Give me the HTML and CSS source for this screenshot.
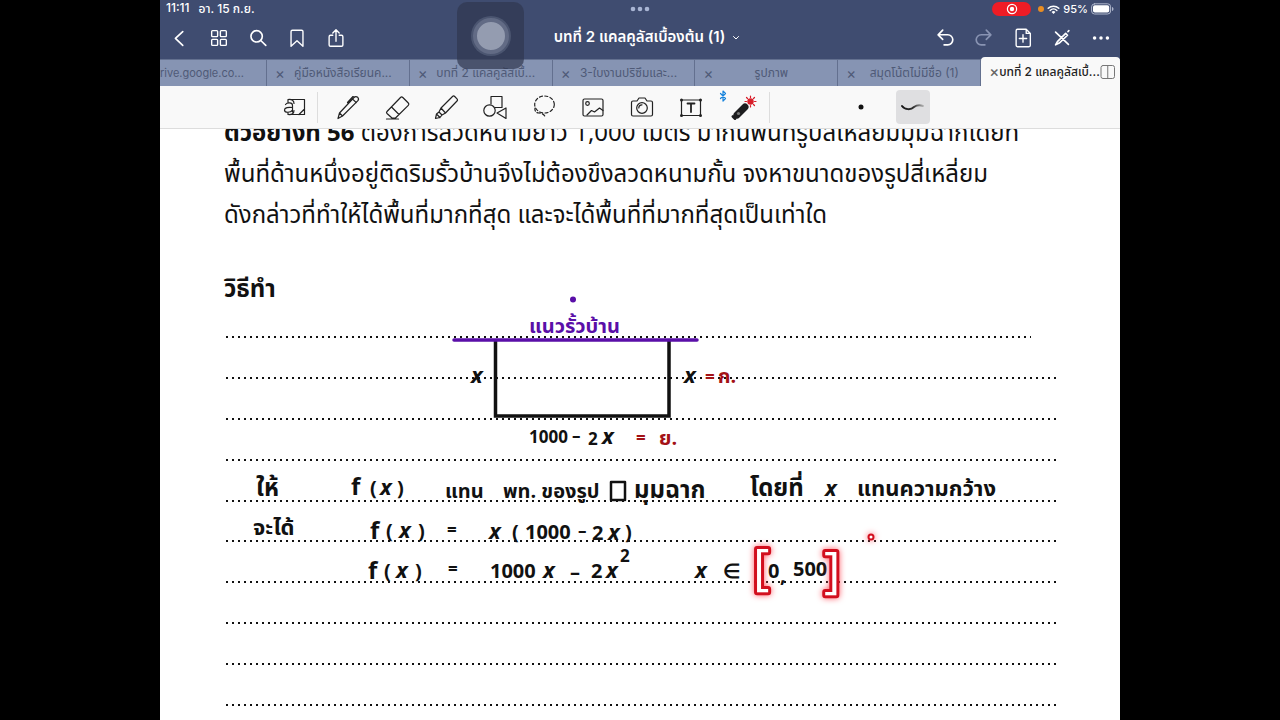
FILE: index.html
```html
<!DOCTYPE html>
<html lang="th">
<head>
<meta charset="utf-8">
<meta name="viewport" content="width=device-width, initial-scale=1">
<title>บทที่ 2 แคลคูลัสเบื้องต้น (1)</title>
<link rel="stylesheet" href="styles.css">
</head>
<body>
<div class="app">
  <header class="header">
    <div class="status">
      <div class="status-left"><span>11:11</span><span>อา. 15 ก.ย.</span></div>
      <svg class="multitask" viewBox="0 0 20 6" aria-hidden="true"><circle cx="3" cy="3" r="2.3"/><circle cx="10" cy="3" r="2.3"/><circle cx="17" cy="3" r="2.3"/></svg>
      <div class="status-right">
        <span class="recording"><svg viewBox="0 0 12 12" aria-hidden="true"><circle class="ring" cx="6" cy="6" r="4.6"/><circle class="core" cx="6" cy="6" r="2.2"/></svg></span>
        <span class="mic"></span>
        <svg class="wifi" viewBox="0 0 14 11" aria-hidden="true"><path d="M1.3 4.2a8.2 8.2 0 0 1 11.4 0M3.4 6.5a5.2 5.2 0 0 1 7.2 0"/><path class="solid" d="M4.9 8.2a3 3 0 0 1 4.2 0L7 10.4z"/></svg>
        <span class="percent">95%</span>
        <svg class="battery" viewBox="0 0 23 12" aria-hidden="true"><rect class="shell" x=".6" y=".8" width="19" height="10.2" rx="3"/><rect class="charge" x="2" y="2.2" width="16.2" height="7.4" rx="1.8"/><path class="cap" d="M21 4v4c.9-.3 1.5-1.1 1.5-2S21.900 4.300 21 4z"/></svg>
      </div>
    </div>
    <nav class="nav">
      <div class="nav-group">
        <button class="nav-btn" aria-label="ย้อนกลับ"><svg viewBox="0 0 24 24"><path d="M15 5l-8 7.500 8 7.500"/></svg></button>
        <button class="nav-btn" aria-label="ภาพย่อ"><svg class="thin" viewBox="0 0 24 24"><rect x="4" y="4" width="6.500" height="6.500" rx="1"/><rect x="13.500" y="4" width="6.500" height="6.500" rx="1"/><rect x="4" y="13.500" width="6.500" height="6.500" rx="1"/><rect x="13.500" y="13.500" width="6.500" height="6.500" rx="1"/></svg></button>
        <button class="nav-btn" aria-label="ค้นหา"><svg viewBox="0 0 24 24"><circle cx="10.500" cy="10.200" r="6.200"/><path d="M15 14.700l5.500 5.300"/></svg></button>
        <button class="nav-btn" aria-label="บุ๊กมาร์ก"><svg class="thin" viewBox="0 0 24 24"><path d="M7 3.500h10a1.500 1.500 0 0 1 1.500 1.500v16L12 15l-6.500 6V5A1.500 1.500 0 0 1 7 3.500z"/></svg></button>
        <button class="nav-btn" aria-label="แชร์"><svg class="thin" viewBox="0 0 24 24"><path d="M8.500 9H6a1.500 1.500 0 0 0-1.500 1.500v9A1.500 1.500 0 0 0 6 21h12a1.500 1.500 0 0 0 1.500-1.500v-9A1.500 1.500 0 0 0 18 9h-2.500M12 15.500V3.500M8.500 6.500L12 3l3.500 3.500"/></svg></button>
      </div>
      <button class="doc-title">บทที่ 2 แคลคูลัสเบื้องต้น (1)<svg viewBox="0 0 8 6" aria-hidden="true"><path d="M1.500 1.500L4 4l2.500-2.500"/></svg></button>
      <div class="nav-group nav-end">
        <button class="nav-btn" aria-label="เลิกทำ"><svg viewBox="0 0 24 24"><path d="M9.500 3.500L4.500 8.500l5 5M5 8.500h10a5.500 5.500 0 0 1 0 11h-4"/></svg></button>
        <button class="nav-btn faded" aria-label="ทำซ้ำ"><svg viewBox="0 0 24 24"><path d="M14.500 3.500l5 5-5 5M19 8.500H9a5.500 5.500 0 0 0 0 11h4"/></svg></button>
        <button class="nav-btn" aria-label="เพิ่มหน้า"><svg class="thin" viewBox="0 0 24 24"><path d="M6 2.500h9.500L20 7v13a1.500 1.500 0 0 1-1.500 1.500H6A1.500 1.500 0 0 1 4.500 20V4A1.500 1.500 0 0 1 6 2.500zM15.500 2.500V7H20M12 8.500v8M8 12.500h8"/></svg></button>
        <button class="nav-btn" aria-label="โหมดอ่าน"><svg viewBox="0 0 24 24"><path d="M5 5.500l14 13.500M5 19.500l2-3.500 9-9 2 2-9 8.500zM18.500 5l1-1"/></svg></button>
        <button class="nav-btn" aria-label="เพิ่มเติม"><svg class="dots" viewBox="0 0 24 24"><circle cx="5" cy="12" r="1.900"/><circle cx="12" cy="12" r="1.900"/><circle cx="19" cy="12" r="1.900"/></svg></button>
      </div>
    </nav>
  </header>

  <div class="tabs">
    <button class="tab tab-cut"><span>rive.google.co...</span></button>
    <button class="tab"><i>×</i><span>คู่มือหนังสือเรียนค...</span></button>
    <button class="tab"><i>×</i><span>บทที่ 2 แคลคูลัสเบื้...</span></button>
    <button class="tab"><i>×</i><span>3-ใบงานปริซึมและ...</span></button>
    <button class="tab"><i>×</i><span>รูปภาพ</span></button>
    <button class="tab"><i>×</i><span>สมุดโน้ตไม่มีชื่อ (1)</span></button>
    <button class="tab tab-active"><i>×</i><span>บทที่ 2 แคลคูลัสเบื้...</span><svg viewBox="0 0 16 16" aria-hidden="true"><rect x="1" y="1.500" width="13.500" height="13" rx="2"/><path d="M7.750 1.500v13"/></svg></button>
  </div>

  <div class="toolbar">
    <button class="tool" aria-label="ซูม"><svg viewBox="0 0 28 28"><path d="M8 9V6.500h16.500v15H8v-2M24 16.500l-5 5M5.500 11.500c1.500-2 7-2.500 7 1V19M12.500 14.500c-4-.5-8 0-8 2.500 0 3 6 3 8 0M8 6.500c4-.5 6 1 6 4M8 21.500c4 .5 6-1 6-4"/></svg></button>
    <span class="divider"></span>
    <button class="tool" aria-label="ปากกา"><svg viewBox="0 0 28 28"><path d="M4 25.500l1.500-5.500L20 4.500c1-1 2.500-1.200 3.700-.2 1.100 1.100 1 2.500 0 3.600L8.500 23zM18.500 6l3.800 3.600M5.500 20l3 3M13.500 9.500l5.500-6 1.500.700"/></svg></button>
    <button class="tool" aria-label="ยางลบ"><svg viewBox="0 0 28 28"><path d="M4 18.500L17.500 4.500c.8-.8 1.500-.8 2.300 0l5.500 5.500c.8.800.8 1.500 0 2.300L12.500 25H9L4 20.500c-.6-.6-.6-1.400 0-2zM8.500 14l7.500 7.500M3.500 26h12"/></svg></button>
    <button class="tool" aria-label="ปากกาเน้นข้อความ"><svg viewBox="0 0 28 28"><path d="M9 15L20.500 3.500c.7-.7 1.500-.7 2.200 0l2.300 2.300c.7.700.7 1.500 0 2.200L13.500 20zM9 15l-2 4 3 3 3.500-2M7 19l-2.500 2 3.500 3.500 2-2.500M4.500 21l-1 4.500L8 24.500"/></svg></button>
    <button class="tool" aria-label="รูปทรง"><svg viewBox="0 0 28 28"><path d="M10 11V3.500h11v11h-7"/><circle cx="8.500" cy="17.500" r="5.700"/><path d="M25 15v10.500L16 20z"/></svg></button>
    <button class="tool" aria-label="บ่วงเลือก"><svg viewBox="0 0 28 28"><ellipse class="dash" cx="14.500" cy="11.500" rx="9.800" ry="8.500"/><path class="dash" d="M5 15c-.5 3 1 5 4 5s6 2 6.500 5"/></svg></button>
    <button class="tool" aria-label="รูปภาพ"><svg viewBox="0 0 28 28"><rect x="4" y="6" width="20" height="17" rx="1.500"/><circle cx="8.500" cy="10.500" r="1.800"/><path d="M8 22l4.500-4.500 3 1.500 5-4 3.500 2.500"/></svg></button>
    <button class="tool" aria-label="กล้อง"><svg viewBox="0 0 28 28"><path d="M5 8h4l2-3h6l2 3h4a1.500 1.500 0 0 1 1.500 1.500v12A1.500 1.500 0 0 1 23 23H5a1.500 1.500 0 0 1-1.500-1.500v-12A1.500 1.500 0 0 1 5 8z"/><circle cx="14" cy="15" r="5.300"/><path d="M10.800 15a3.200 3.200 0 0 1 3.200-3.200"/></svg></button>
    <button class="tool" aria-label="ข้อความ"><svg viewBox="0 0 28 28"><path d="M4.500 7h19v15.500h-19z"/><path class="heavy" d="M10.500 10.500h7M14 10.500V19"/><g class="solid"><circle cx="4.500" cy="7" r="1.500"/><circle cx="23.500" cy="7" r="1.500"/><circle cx="4.500" cy="22.500" r="1.500"/><circle cx="23.500" cy="22.500" r="1.500"/></g></svg></button>
    <button class="tool laser" aria-label="ตัวชี้เลเซอร์"><svg viewBox="0 0 42 34"><path class="bt" d="M1.500 3.500l5 5-2.500 2.500V1l2.500 2.500-5 5"/><path class="body" d="M18 25l8-8"/><path class="tip" d="M16 28.500l-2-2"/><circle class="lens" cx="19.500" cy="23.500" r="1.600"/><g class="beam"><circle cx="31.500" cy="11.500" r="2.600"/><path d="M31.500 6v1.500M31.500 15.500V17M26 11.500h1.500M35.500 11.500H37M27.500 7.500l1 1M35.500 7.500l-1 1M35.500 15.500l-1-1"/></g></svg></button>
    <span class="divider"></span>
    <button class="nib nib-dot" aria-label="จุด"><svg viewBox="0 0 34 34"><circle cx="17" cy="17" r="2.500"/></svg></button>
    <button class="nib nib-on" aria-label="เส้น"><svg viewBox="0 0 34 34"><defs><linearGradient id="trail" gradientUnits="userSpaceOnUse" x1="5" y1="0" x2="28" y2="0"><stop offset="0" stop-color="#111"/><stop offset=".55" stop-color="#333"/><stop offset="1" stop-color="#bbb"/></linearGradient></defs><path d="M6 16c3 4 9 4 12 1 3-2 6-2 9-1"/></svg></button>
  </div>

  <main class="sheet">
    <p class="problem"><b>ตัวอย่างที่ 56</b> ต้องการลวดหนามยาว 1,000 เมตร มากั้นพื้นที่รูปสี่เหลี่ยมมุมฉากโดยที่<br>พื้นที่ด้านหนึ่งอยู่ติดริมรั้วบ้านจึงไม่ต้องขึงลวดหนามกั้น จงหาขนาดของรูปสี่เหลี่ยม<br>ดังกล่าวที่ทำให้ได้พื้นที่มากที่สุด และจะได้พื้นที่ที่มากที่สุดเป็นเท่าใด</p>
    <h1 class="method">วิธีทำ</h1>
    <div class="rules"><hr class="short"><hr><hr><hr><hr><hr><hr><hr><hr><hr></div>
    <svg class="ink" viewBox="160 128 960 592" role="img" aria-label="ลายมือวิธีทำ">
      <path class="walls" d="M495.500 340v75H669V340"/>
      <path class="fence" d="M454 339h243"/>
      <g class="violet"><circle cx="573" cy="298.500" r="3"/><text x="529" y="332">แนวรั้วบ้าน</text></g>
      <text class="var" x="471" y="382">x</text>
      <text class="var" x="684" y="382">x</text>
      <g class="red"><text class="small" x="705" y="382">=</text><text x="718" y="382">ก.</text><text class="small" x="636" y="443">=</text><text x="659" y="444">ย.</text></g>
      <text class="small" x="529" y="442">1000</text><text class="small" x="572" y="441">–</text><text class="small" x="588" y="444">2</text><text class="var" x="602" y="443">x</text>
      <text class="big" x="256" y="495">ให้</text>
      <text class="big" x="351" y="494">f</text><text x="370" y="494">(</text><text class="var" x="380" y="494">x</text><text x="397" y="494">)</text>
      <text x="445" y="497">แทน</text><text x="503" y="497">พท. ของรูป</text><path class="box" d="M611 481h14v18h-14z"/><text class="big" x="634" y="497">มุมฉาก</text>
      <text class="big" x="750" y="495">โดยที่</text><text class="var" x="825" y="495">x</text><text class="wide" x="857" y="495">แทนความกว้าง</text>
      <text class="wide" x="253" y="534">จะได้</text>
      <text class="big" x="370" y="538">f</text><text x="386" y="537">(</text><text class="var" x="399" y="537">x</text><text x="418" y="537">)</text><text class="small" x="447" y="535">=</text>
      <text class="var" x="489" y="538">x</text><text x="512" y="538">(</text><text x="525" y="538">1000</text><text class="small" x="578" y="536">–</text><text x="592" y="539">2</text><text class="var" x="608" y="539">x</text><text x="625" y="538">)</text>
      <text class="big" x="368" y="578">f</text><text x="384" y="577">(</text><text class="var" x="396" y="577">x</text><text x="415" y="577">)</text><text class="small" x="448" y="574">=</text>
      <text x="490" y="577">1000</text><text class="var" x="543" y="577">x</text><text x="570" y="578">–</text><text x="591" y="577">2</text><text class="var" x="606" y="577">x</text><text class="sup" x="620" y="561">2</text>
      <text class="var" x="695" y="577">x</text><text x="723" y="577">∈</text>
      <text x="768" y="577">0</text><text x="780" y="581">,</text><text x="793" y="575">500</text>
      <g class="glow"><text x="753" y="583">[</text><text x="824" y="586">]</text><circle cx="871" cy="536" r="2.500"/></g>
    </svg>
  </main>
  <button class="assist" aria-label="AssistiveTouch"><span></span></button>
</div>
</body>
</html>
```
FILE: styles.css
```css
* { box-sizing: border-box; }
body { margin: 0; background: #000; font-family: Inter, "Noto Sans", "Noto Sans Thai", sans-serif; }
button { margin: 0; padding: 0; border: 0; background: none; color: inherit; font: inherit; }
svg { display: block; fill: none; stroke: currentColor; stroke-linecap: round; stroke-linejoin: round; }

.app { position: relative; display: flex; flex-direction: column; width: 75%; height: 100vh; margin: 0 auto; overflow: hidden; background: #fff; }

.header { background: #3f4c70; color: #fff; }
.status { display: grid; grid-template-columns: 1fr auto 1fr; align-items: center; height: 18px; padding: 0 6px; font-size: 12px; font-weight: 500; }
.status-left { display: flex; gap: 9px; }
.multitask { width: 20px; height: 6px; fill: #a9b5d4; stroke: none; }
.status-right { display: flex; justify-content: flex-end; align-items: center; gap: 3px; }
.recording { display: grid; place-items: center; width: 39px; height: 14px; border-radius: 7px; background: #ee1c25; }
.recording svg { width: 12px; height: 12px; }
.core, .solid, .charge, .cap { fill: currentColor; stroke: none; }
.ring { stroke-width: 1.2; }
.mic { width: 6px; height: 6px; margin-left: 4px; border-radius: 50%; background: #e98d22; }
.wifi { width: 13px; height: 11px; stroke-width: 1.6; }
.percent { font-size: 11px; }
.battery { width: 23px; height: 12px; }
.shell { stroke: #aeb6cb; }
.cap { fill: #aeb6cb; }

.nav { display: grid; grid-template-columns: 1fr auto 1fr; align-items: center; height: 41px; padding-bottom: 2px; }
.nav-group { display: flex; align-items: center; }
.nav-end { justify-content: flex-end; }
.nav-btn { display: grid; place-items: center; width: 39px; height: 39px; }
.nav-btn svg { width: 22px; height: 22px; stroke-width: 1.8; }
.nav-btn .thin { stroke-width: 1.5; }
.nav-btn .dots { fill: currentColor; stroke: none; }
.faded { color: #8994b3; }
.doc-title { display: flex; align-items: center; gap: 7px; padding-left: 14px; font-size: 15px; font-weight: 600; white-space: nowrap; }
.doc-title svg { width: 8px; height: 6px; }

.tabs { display: flex; flex: none; height: 27px; background: #8694b3; color: #4f5a77; font-size: 12px; }
.tab { display: flex; flex: 1 1 0; align-items: center; min-width: 0; height: 27px; padding: 0 8px; border-top: 1px solid #63708f; border-right: 1px solid #63708f; white-space: nowrap; }
.tab i { width: 10px; font-size: 15px; font-style: normal; }
.tab span { flex: 1; text-align: center; }
.tab-cut { flex: 0 0 107px; padding: 0; font-size: 11px; }
.tab-cut span { flex: none; }
.tab-active { height: 29px; margin-top: -2px; padding: 0 5px 0 8px; border: 0; border-radius: 4px 4px 0 0; background: #f9f9f9; color: #222; font-weight: 500; }
.tab-active i { color: #666; }
.tab-active span { text-align: right; }
.tab-active svg { flex: none; width: 16px; height: 16px; stroke: #777; }

.toolbar { display: flex; flex: none; align-items: center; height: 43px; padding-left: 110px; border-bottom: 1px solid #ddd; background: #f9f9f9; color: #222; }
.tool { display: grid; place-items: center; width: 49px; height: 42px; }
.tool:first-child { width: 47px; }
.tool svg { width: 28px; height: 28px; stroke-width: 1.2; }
.tool .heavy { stroke-width: 1.8; }
.divider { width: 1px; height: 31px; margin-right: 5px; background: #ddd; }
.laser + .divider { margin: 0 74px 0 5px; }
.dash { stroke-dasharray: 3 2.4; }
.tool.laser svg { width: 42px; height: 34px; }
.bt { stroke: #1683dc; }
.body { stroke: #1d1d1f; stroke-width: 7; }
.tip { stroke: #1d1d1f; stroke-width: 3; }
.lens { fill: #777; stroke: none; }
.beam { stroke: #d81e2a; }
.beam circle { fill: #d81e2a; }
.nib { width: 34px; height: 34px; border-radius: 4px; }
.nib-dot svg { fill: #111; stroke: none; }
.nib-on { margin-left: 18px; background: #dfdfe1; }
.nib-on svg { stroke: url(#trail); stroke-width: 2; }

.sheet { position: relative; display: flex; flex: 1; flex-direction: column; min-height: 0; padding: 0 64px 14px; overflow: hidden; color: #111; font-family: "Noto Sans", "Noto Sans Thai", sans-serif; }
.problem { margin: -18px 0 0; font-size: 24px; line-height: 41px; white-space: nowrap; }
.method { margin: 33px 0 0; font-size: 24px; line-height: 41px; }
.rules { display: flex; flex: 1; flex-direction: column; justify-content: space-between; margin-top: 28px; }
.rules hr { width: 100%; height: 2px; margin: 0; border: 0; background: radial-gradient(circle, #111 0 1px, transparent 1px) 0 0 / 6px 2px; }
.rules .short { width: 97%; }

.ink { position: absolute; inset: 0; width: 100%; height: auto; color: #111; stroke: none; fill: #111; font: 700 20px "Open Sans", "Noto Sans Thai", sans-serif; }
.ink .walls { fill: none; stroke: #111; stroke-width: 3.5; stroke-linecap: butt; stroke-linejoin: miter; }
.ink .fence { stroke: #5a0fa8; stroke-width: 3.5; }
.ink .box { fill: none; stroke: #111; stroke-width: 2.5; }
.violet { fill: #5a0fa8; }
.red { fill: #a31216; }
.var { font-size: 22px; font-style: italic; }
.big { font-size: 24px; }
.wide { font-size: 22px; }
.small { font-size: 17px; }
.sup { font-size: 17px; }
.glow { filter: drop-shadow(0 0 3px #ff5a66); }
.glow text { font-size: 50px; font-weight: 400; fill: #fff; stroke: #d20f1e; stroke-width: 6; paint-order: stroke; }
.glow circle { fill: #fff; stroke: #d20f1e; stroke-width: 2; }

.assist { position: absolute; top: 2px; left: 297px; display: grid; place-items: center; width: 67px; height: 67px; border-radius: 10px; background: rgba(48, 56, 80, .7); }
.assist span { width: 36px; height: 36px; border: 4px solid #626b85; border-radius: 50%; background: #949cb0; box-shadow: 0 0 0 2px #4b5570; }
```
